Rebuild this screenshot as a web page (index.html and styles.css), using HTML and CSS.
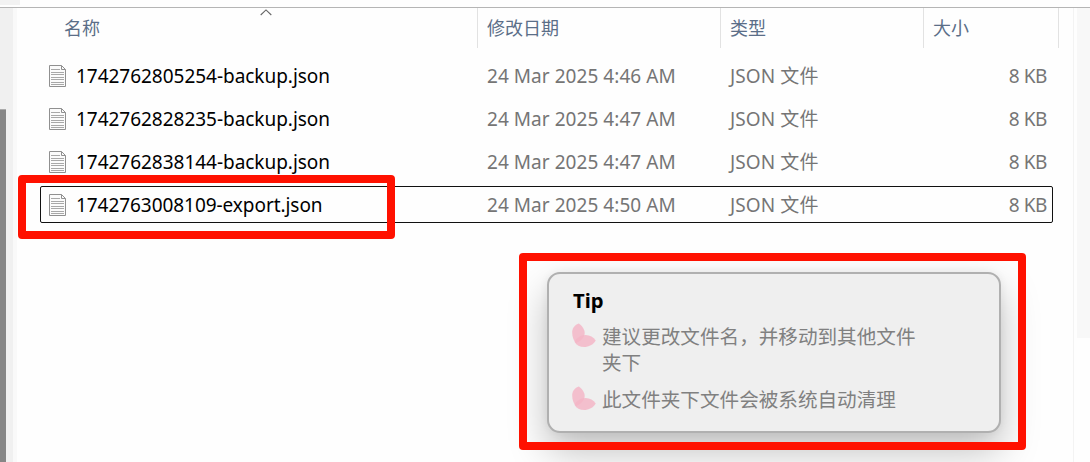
FILE: index.html
```html
<!DOCTYPE html>
<html lang="zh-CN">
<head>
<meta charset="utf-8">
<title>文件</title>
<link rel="stylesheet" href="styles.css">
</head>
<body>
<svg class="defs" width="0" height="0" aria-hidden="true">
  <symbol id="doc" viewBox="0 0 18 23">
    <path d="M.5 .5H12.5L16.5 4.500V21.500H.5Z" fill="#fbfbfb" stroke="#909090"/>
    <path d="M12.500 .5V4.500H16.500" fill="none" stroke="#909090"/>
    <path d="M2 4.500H11M2 7.500H15M2 9.500H15M2 12.500H15M2 14.500H15M2 17.500H15M2 19.500H15" stroke="#a8a8a8"/>
  </symbol>
  <symbol id="petal" viewBox="0 0 24 25">
    <path d="M6.800.6C10.500 3 12.800 7 12.700 10.500C12.500 14.500 8.500 18.500 4 20C1 17 -.2 12 .3 7.800C.9 4.500 3.500 1.500 6.800.6Z" fill="#f4b4c6" fill-opacity=".82"/>
    <path d="M2.600 19C4.500 14.500 9 12 13.500 11.900C18 11.900 21.500 14 23.700 17.500C21.500 21.800 16.500 24 12 24C8 24 4.500 22.200 2.600 19Z" fill="#f4b4c6" fill-opacity=".82"/>
  </symbol>
</svg>
<div class="window">
  <div class="toolbar"><div class="toolbar-tab"></div></div>
  <div class="content">
    <div class="sidebar"><div class="scroll-thumb"></div></div>
    <main class="files">
      <div class="row header">
        <div class="cell">名称</div><div class="cell">修改日期</div><div class="cell">类型</div><div class="cell">大小</div>
        <svg class="sort" viewBox="0 0 12 7"><path d="M.7 6L6 .9L11.300 6" fill="none" stroke="#666" stroke-width="1.1"/></svg>
      </div>
      <div class="list">
        <div class="row file"><div class="name"><svg class="doc"><use href="#doc"/></svg><span>1742762805254-backup.json</span></div><div class="date">24 Mar 2025 4:46 AM</div><div class="type">JSON 文件</div><div class="size">8 KB</div></div>
        <div class="row file"><div class="name"><svg class="doc"><use href="#doc"/></svg><span>1742762828235-backup.json</span></div><div class="date">24 Mar 2025 4:47 AM</div><div class="type">JSON 文件</div><div class="size">8 KB</div></div>
        <div class="row file"><div class="name"><svg class="doc"><use href="#doc"/></svg><span>1742762838144-backup.json</span></div><div class="date">24 Mar 2025 4:47 AM</div><div class="type">JSON 文件</div><div class="size">8 KB</div></div>
        <div class="row file focused"><div class="name"><svg class="doc"><use href="#doc"/></svg><span class="export">1742763008109-export.json</span></div><div class="date">24 Mar 2025 4:50 AM</div><div class="type">JSON 文件</div><div class="size">8 KB</div></div>
      </div>
    </main>
    <aside class="preview"><div class="preview-track"></div></aside>
  </div>
</div>
<section class="tip">
  <h2>Tip</h2>
  <ul>
    <li><svg class="petal"><use href="#petal"/></svg><div class="lines"><div>建议更改文件名，并移动到其他文件</div><div>夹下</div></div></li>
    <li><svg class="petal"><use href="#petal"/></svg><div class="lines">此文件夹下文件会被系统自动清理</div></li>
  </ul>
</section>
<div class="mark mark-file"></div>
<div class="mark mark-tip"></div>
</body>
</html>
```

FILE: styles.css
```css
* { box-sizing: border-box; }
body {
  position: relative;
  width: 1090px;
  height: 462px;
  margin: 0;
  overflow: hidden;
  background: #fefefe;
  font-family: "Noto Sans", "Noto Sans CJK SC", sans-serif;
  font-size: 19px;
  color: #757575;
}
.defs { position: absolute; }
.window { display: flex; flex-direction: column; height: 462px; }
.toolbar { height: 8px; border-bottom: 1px solid #b5b5b5; }
.toolbar-tab { width: 20px; height: 5px; background: #f2f2f2; }
.content { display: flex; flex: 1; }
.sidebar { width: 17px; padding-top: 101px; background: #f0f0f0; border-right: 4px solid #f9f9f9; }
.scroll-thumb { width: 6px; height: 353px; background: #868686; border-top: 1px solid #aaa; }
.files { width: 1056px; }
.row { display: grid; grid-template-columns: 461px 243px 203px 135px; }
.header {
  position: relative;
  height: 40px;
  font-family: "Noto Sans CJK SC", sans-serif;
  font-size: 18px;
  color: #5b6e88;
}
.header .cell { padding-left: 9px; line-height: 39px; border-right: 1px solid #e2e2e2; }
.header .cell:first-child { padding-left: 47px; }
.sort { position: absolute; left: 243px; top: 1px; width: 12px; height: 7px; }
.list { display: flex; flex-direction: column; gap: 6px; padding: 9px 20px 0 23px; }
.file {
  grid-template-columns: 438px 243px 203px 1fr;
  height: 37px;
  line-height: 39px;
  white-space: nowrap;
  outline-offset: -1px;
}
.focused { outline: 1px solid #111; border-radius: 2px; }
.name { display: flex; align-items: center; gap: 9px; height: 37px; padding-left: 9px; color: #000; }
.name span { padding-top: 1px; line-height: 37px; letter-spacing: -.03px; }
.name .export { letter-spacing: -.06px; }
.doc { width: 18px; height: 23px; margin-top: 1px; flex: none; }
.date, .type { padding-left: 9px; }
.date { letter-spacing: .05px; }
.type { height: 37px; padding-top: 1px; line-height: 37px; letter-spacing: .1px; }
.size { padding-right: 6px; text-align: right; letter-spacing: -.4px; }
.preview { width: 17px; height: 454px; border-left: 1px solid #f3f3f3; padding-left: 3px; }
.preview-track { height: 330px; background: #f8f8f8; }
.tip {
  position: absolute;
  left: 547px;
  top: 272px;
  width: 454px;
  height: 161px;
  padding: 13px 24px;
  background: #efefef;
  border: 2px solid #b0b0b0;
  border-radius: 13px;
  box-shadow: 0 18px 38px rgba(0, 0, 0, .25), 0 0 9px rgba(0, 0, 0, .06);
}
.tip h2 { margin: 0; font-size: 20.3px; line-height: 26px; color: #000; }
.tip ul {
  display: flex;
  flex-direction: column;
  gap: 9px;
  margin: 9px 0 0;
  padding: 0;
  list-style: none;
  font: 19.6px/26px "Liberation Sans", "Noto Sans CJK SC", sans-serif;
  color: #808080;
}
.tip li { display: flex; gap: 6px; white-space: nowrap; }
.lines { padding-top: 2px; }
.petal { width: 24px; height: 25px; margin: 1px 0 0 -1px; flex: none; }
.mark { position: absolute; border: 8px solid #ff1100; border-radius: 4px; }
.mark-file { left: 18px; top: 175px; width: 377px; height: 64px; }
.mark-tip { left: 519px; top: 253px; width: 507px; height: 197px; }
```
